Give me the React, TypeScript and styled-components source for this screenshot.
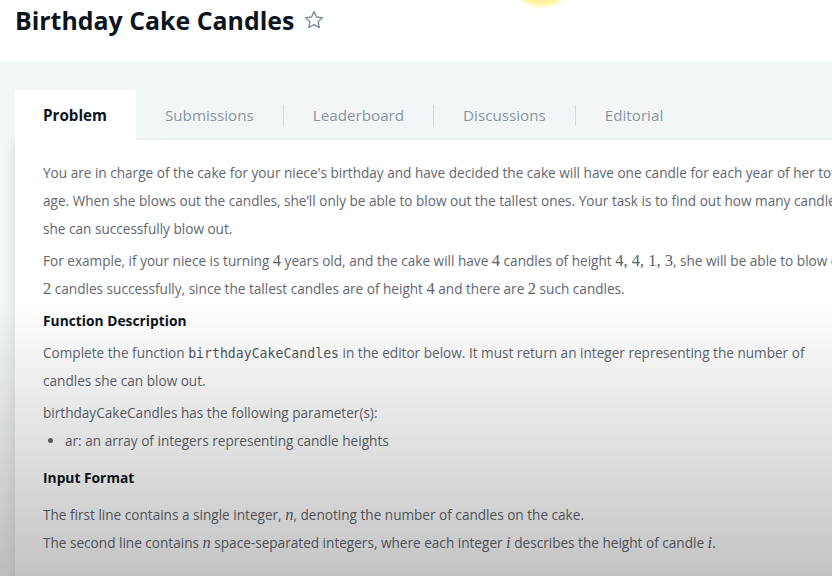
import React from "react";
import styled, { createGlobalStyle } from "styled-components";

const GlobalStyle = createGlobalStyle`
  html, body { margin: 0; padding: 0; }
  body {
    width: 832px;
    height: 576px;
    overflow: hidden;
    background: #f3f6f7;
    font-family: "Open Sans", "Noto Sans", sans-serif;
  }
  body::after {
    content: "";
    position: fixed;
    inset: 0;
    pointer-events: none;
    background: linear-gradient(
      to bottom,
      rgba(0, 0, 0, 0) 0,
      rgba(0, 0, 0, 0) 300px,
      rgba(0, 0, 0, 0.125) 450px,
      rgba(0, 0, 0, 0.23) 576px
    );
  }
`;

const Page = styled.div`
  position: relative;
  width: 832px;
  height: 576px;
  overflow: hidden;
  background: #f3f6f7;
`;

const Glow = styled.div`
  position: absolute;
  top: -14px;
  left: 520px;
  width: 44px;
  height: 20px;
  border-radius: 50%;
  background: #fff29a;
  filter: blur(2px);
`;

const Header = styled.header`
  height: 61px;
  background: #ffffff;
  display: flex;
  align-items: flex-start;
  gap: 9px;
  padding-left: 15px;
  box-sizing: border-box;
`;

const Title = styled.h1`
  margin: 0;
  font-size: 24.9px;
  line-height: 40px;
  font-weight: 700;
  color: #0e141e;
`;

const StarWrap = styled.span`
  display: flex;
  margin-top: 9px;
  color: #7e8f9c;
`;

const Main = styled.main`
  padding: 29px 0 0 15px;
`;

const Tabs = styled.nav`
  display: flex;
  align-items: center;
  height: 50px;
`;

const Tab = styled.div<{ $active?: boolean }>`
  height: 50px;
  display: flex;
  align-items: center;
  padding: 0 29px 0 ${(p) => (p.$active ? "28px" : "29px")};
  font-size: 15.2px;
  font-weight: ${(p) => (p.$active ? 700 : 400)};
  color: ${(p) => (p.$active ? "#0e141e" : "#8796a1")};
  background: ${(p) => (p.$active ? "#ffffff" : "transparent")};
`;

const TabSep = styled.span`
  width: 1px;
  height: 21px;
  background: #d3d9dd;
`;

const Panel = styled.section`
  width: 867px;
  box-sizing: border-box;
  background: #ffffff;
  padding: 19px 28px 0;
  height: 460px;
  box-shadow: -3px 2px 8px rgba(0, 0, 0, 0.07);
  color: #62666e;
  font-size: 13.6px;
  line-height: 27.8px;
`;

const Para = styled.p<{ $gap?: number }>`
  margin: 0 0 ${(p) => (p.$gap ?? 4.5)}px;
`;

const Heading = styled.h3<{ $gap?: number }>`
  margin: 0 0 ${(p) => (p.$gap ?? 4)}px;
  font-size: 13.8px;
  line-height: 27.8px;
  font-weight: 700;
  color: #0e141e;
`;

const Math = styled.span<{ $italic?: boolean }>`
  font-family: "Liberation Serif", "DejaVu Serif", serif;
  font-size: 16.5px;
  line-height: 1;
  font-style: ${(p) => (p.$italic ? "italic" : "normal")};
  color: #5a5e65;
`;

const Code = styled.code`
  font-family: "DejaVu Sans Mono", "Liberation Mono", monospace;
  font-size: 13.2px;
  line-height: 1;
  color: #55595f;
`;

const List = styled.ul`
  margin: 0 0 10px;
  padding-left: 22px;
  list-style: disc;
`;

const Item = styled.li`
  padding-left: 0;
`;

const Star = () => (
  <svg width="22" height="22" viewBox="0 0 24 24" fill="none" stroke="currentColor" strokeWidth="1.5" strokeLinejoin="round">
    <path d="M12 2.8l2.75 5.95 6.5.72-4.85 4.4 1.35 6.4L12 17.05 6.25 20.27l1.35-6.4-4.85-4.4 6.5-.72z" />
  </svg>
);

export default function App() {
  return (
    <>
      <GlobalStyle />
      <Page>
        <Glow />
        <Header>
          <Title>Birthday Cake Candles</Title>
          <StarWrap>
            <Star />
          </StarWrap>
        </Header>
        <Main>
          <Tabs>
            <Tab $active>Problem</Tab>
            <Tab>Submissions</Tab>
            <TabSep />
            <Tab>Leaderboard</Tab>
            <TabSep />
            <Tab>Discussions</Tab>
            <TabSep />
            <Tab>Editorial</Tab>
          </Tabs>
          <Panel>
            <Para>
              You are in charge of the cake for your niece's birthday and have decided the cake will have one candle for
              each year of her total age. When she blows out the candles, she’ll only be able to blow out the tallest
              ones. Your task is to find out how many candles she can successfully blow out.
            </Para>
            <Para>
              For example, if your niece is turning <Math>4</Math> years old, and the cake will have <Math>4</Math>{" "}
              candles of height <Math>4, 4, 1, 3</Math>, she will be able to blow out <Math>2</Math> candles
              successfully, since the tallest candles are of height <Math>4</Math> and there are <Math>2</Math> such
              candles.
            </Para>
            <Heading>Function Description</Heading>
            <Para>
              Complete the function <Code>birthdayCakeCandles</Code> in the editor below. It must return an integer
              representing the number of candles she can blow out.
            </Para>
            <Para $gap={0}>birthdayCakeCandles has the following parameter(s):</Para>
            <List>
              <Item>ar: an array of integers representing candle heights</Item>
            </List>
            <Heading $gap={9}>Input Format</Heading>
            <Para>
              The first line contains a single integer, <Math $italic>n</Math>, denoting the number of candles on the
              cake.
              <br />
              The second line contains <Math $italic>n</Math> space-separated integers, where each integer{" "}
              <Math $italic>i</Math> describes the height of candle <Math $italic>i</Math>.
            </Para>
          </Panel>
        </Main>
      </Page>
    </>
  );
}
